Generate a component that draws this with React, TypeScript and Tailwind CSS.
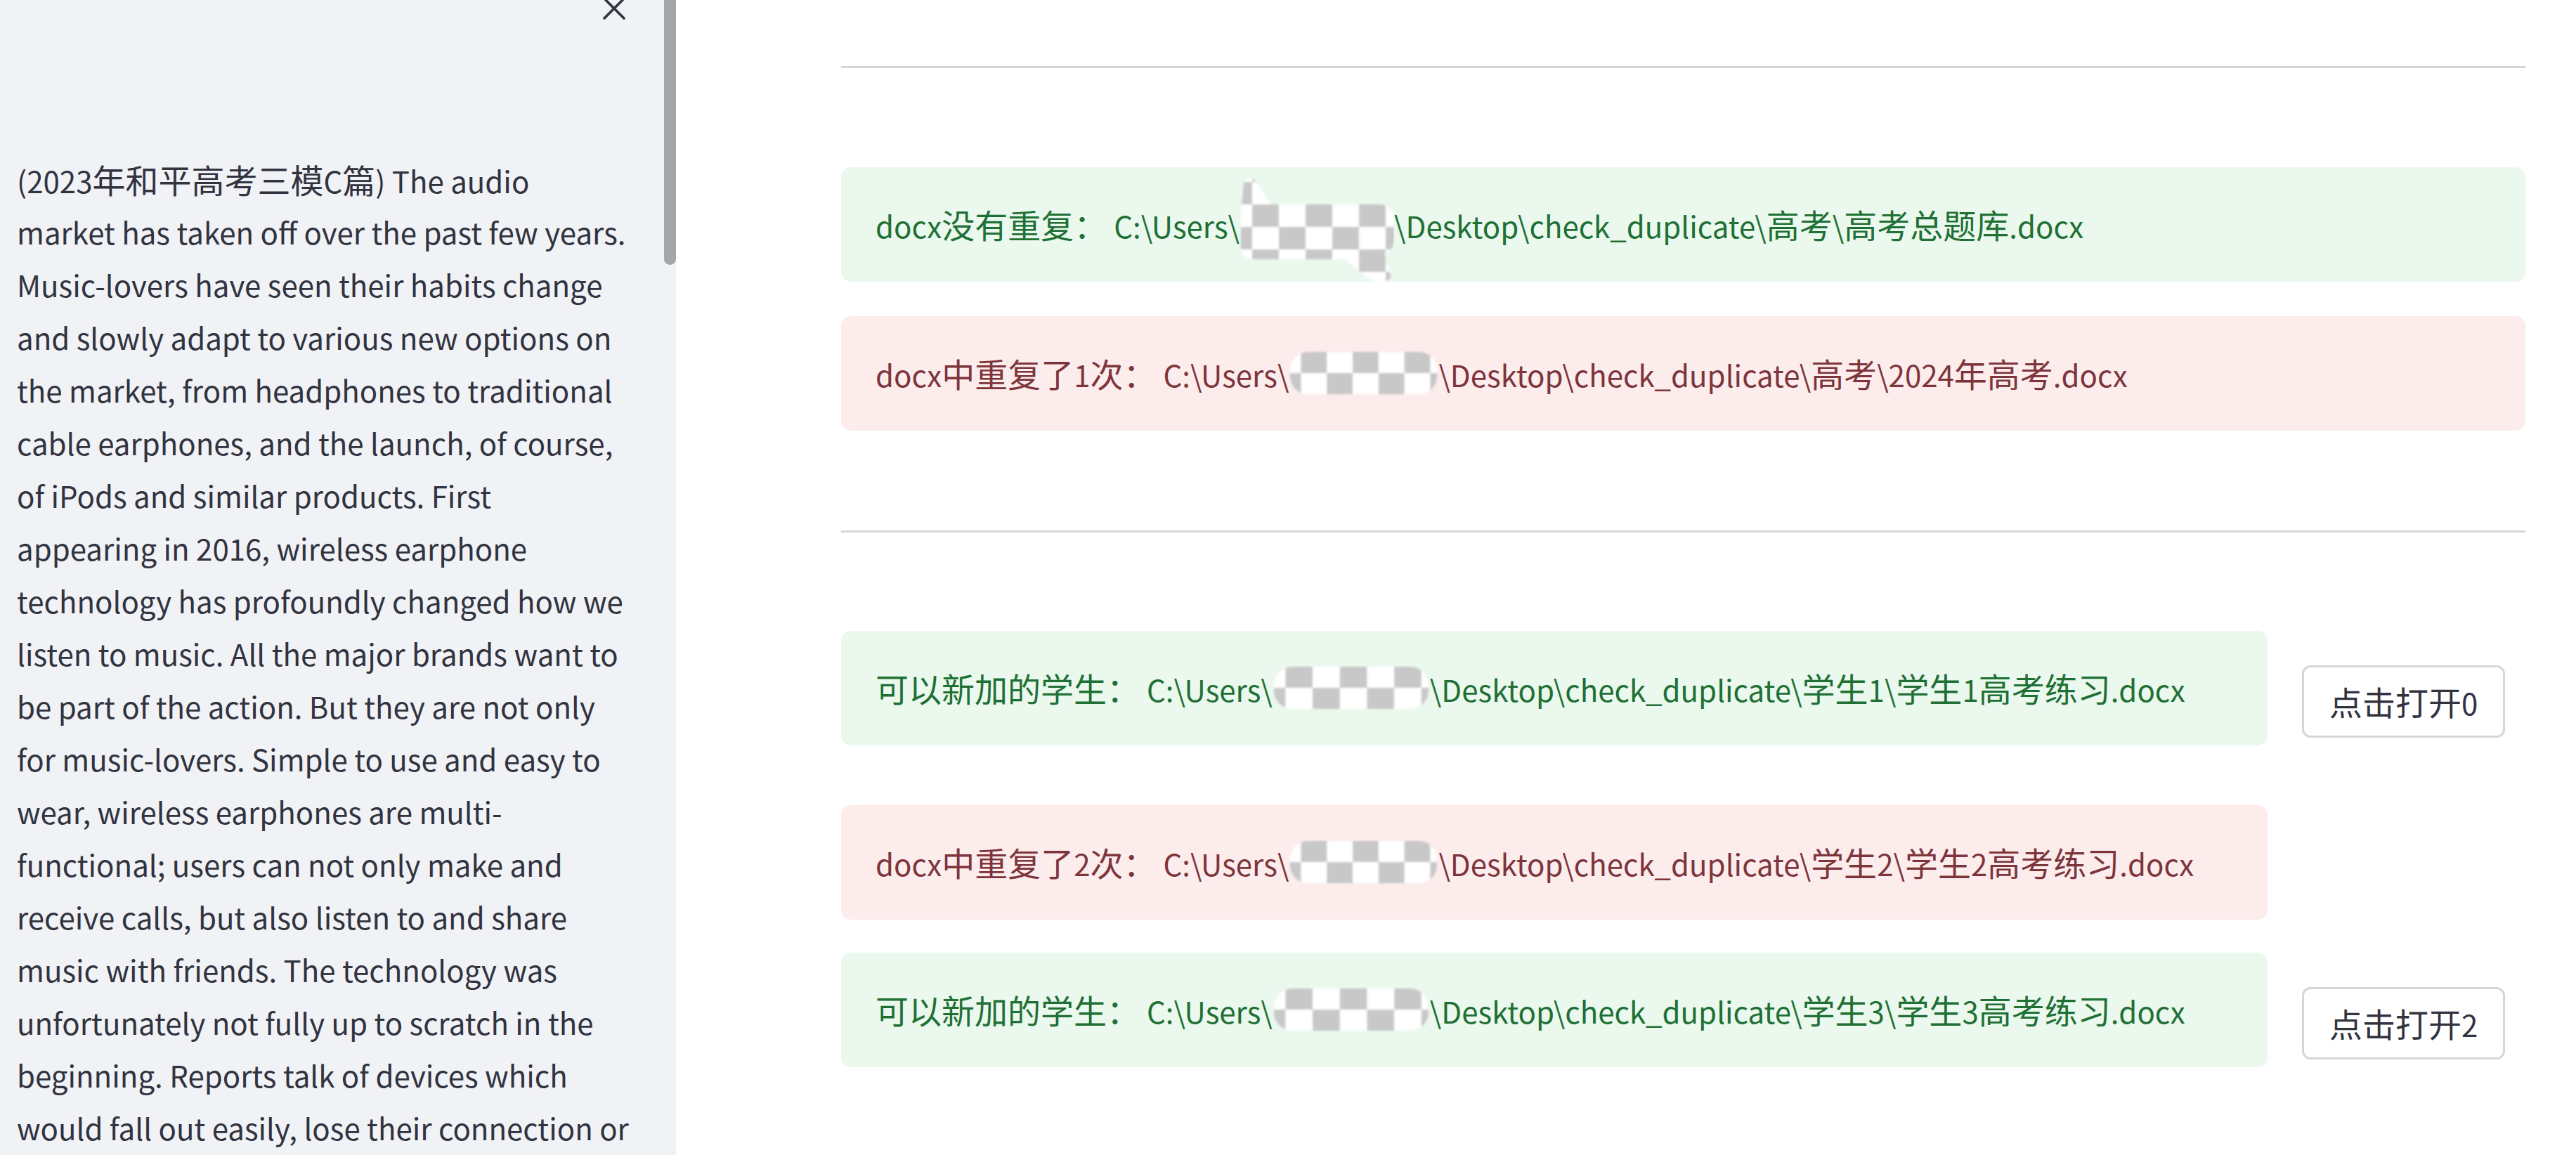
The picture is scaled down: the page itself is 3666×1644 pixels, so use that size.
import { useId } from "react";

const LINES = [
  "(2023年和平高考三模C篇) The audio",
  "market has taken off over the past few years.",
  "Music-lovers have seen their habits change",
  "and slowly adapt to various new options on",
  "the market, from headphones to traditional",
  "cable earphones, and the launch, of course,",
  "of iPods and similar products. First",
  "appearing in 2016, wireless earphone",
  "technology has profoundly changed how we",
  "listen to music. All the major brands want to",
  "be part of the action. But they are not only",
  "for music-lovers. Simple to use and easy to",
  "wear, wireless earphones are multi-",
  "functional; users can not only make and",
  "receive calls, but also listen to and share",
  "music with friends. The technology was",
  "unfortunately not fully up to scratch in the",
  "beginning. Reports talk of devices which",
  "would fall out easily, lose their connection or",
];

type Tone = "ok" | "dup";

type Row = {
  tone: Tone;
  label: string;
  tail: string;
  blob: "plane" | "pill";
  blobWidth: string;
  button?: string;
};

const TOP_ROWS: Row[] = [
  { tone: "ok", label: "docx没有重复：", tail: "\\Desktop\\check_duplicate\\高考\\高考总题库.docx", blob: "plane", blobWidth: "w-[220px]" },
  { tone: "dup", label: "docx中重复了1次：", tail: "\\Desktop\\check_duplicate\\高考\\2024年高考.docx", blob: "pill", blobWidth: "w-[213px]" },
];

const STUDENT_ROWS: Row[] = [
  { tone: "ok", label: "可以新加的学生：", tail: "\\Desktop\\check_duplicate\\学生1\\学生1高考练习.docx", blob: "pill", blobWidth: "w-[224px]", button: "点击打开0" },
  { tone: "dup", label: "docx中重复了2次：", tail: "\\Desktop\\check_duplicate\\学生2\\学生2高考练习.docx", blob: "pill", blobWidth: "w-[213px]" },
  { tone: "ok", label: "可以新加的学生：", tail: "\\Desktop\\check_duplicate\\学生3\\学生3高考练习.docx", blob: "pill", blobWidth: "w-[224px]", button: "点击打开2" },
];

// latin glyphs of the CJK face run wide, so CJK runs get their own size
function Mixed({ text }: { text: string }) {
  const parts = text.split(/([\u3000-\u9fff\uff00-\uffef]+)/);
  return (
    <>
      {parts.map((p, i) =>
        i % 2 === 1 ? (
          <span key={i} className="text-[47px]">
            {p}
          </span>
        ) : (
          p
        ),
      )}
    </>
  );
}

// pixelated username redaction
function Mosaic({ shape, widthClass }: { shape: "plane" | "pill"; widthClass: string }) {
  const id = useId().replace(/:/g, "");
  const plane = shape === "plane";
  return (
    <span className={`relative inline-block h-[75px] align-top ${widthClass}`}>
      <svg
        className={plane ? "absolute left-0 top-[-30px] h-[153px] w-full" : "absolute left-0 top-[6px] h-[64px] w-full"}
        viewBox={plane ? "0 0 220 153" : "0 0 220 64"}
        preserveAspectRatio="none"
      >
        <defs>
          <pattern id={`p${id}`} width="76" height="64" patternUnits="userSpaceOnUse" x="18" y={plane ? "40" : "0"}>
            <rect width="76" height="64" fill="#ffffff" />
            <rect width="38" height="32" fill="#c8c8c8" />
            <rect x="38" y="32" width="38" height="32" fill="#c8c8c8" />
          </pattern>
          <filter id={`f${id}`} x="-10%" y="-10%" width="120%" height="120%">
            <feGaussianBlur stdDeviation="1.8" />
          </filter>
        </defs>
        {plane ? (
          <path
            d="M6 8 Q14 -2 24 8 L44 40 L198 40 Q220 40 220 62 L220 88 Q220 106 206 110 L216 144 Q204 156 184 146 L150 118 L22 118 Q2 118 2 100 L2 54 Z"
            fill={`url(#p${id})`}
            filter={`url(#f${id})`}
          />
        ) : (
          <rect x="2" y="2" width="216" height="60" rx="26" fill={`url(#p${id})`} filter={`url(#f${id})`} />
        )}
      </svg>
    </span>
  );
}

function Alert({ row, widthClass }: { row: Row; widthClass: string }) {
  const tone =
    row.tone === "ok" ? "bg-[#eaf8ee] text-[#1f7034]" : "bg-[#fcecec] text-[#7d353b]";
  return (
    <div className={`flex h-[163px] items-center rounded-[14px] px-[49px] whitespace-nowrap ${tone} ${widthClass}`}>
      <div>
        <Mixed text={row.label} />
        <span className="ml-[10px]">C:\Users\</span>
        <Mosaic shape={row.blob} widthClass={row.blobWidth} />
        <Mixed text={row.tail} />
      </div>
    </div>
  );
}

export default function App() {
  return (
    <div className="flex h-[1644px] w-[3666px] overflow-hidden bg-white font-['Noto_Sans_CJK_SC','Noto_Sans',sans-serif] text-[42px] leading-[75px]">
      <aside className="relative w-[962px] shrink-0 bg-[#f0f2f6] text-[#31333f]">
        <button type="button" className="absolute left-[858px] top-[-4px] h-[32px] w-[32px]" aria-label="Close">
          <svg viewBox="0 0 32 32" className="h-full w-full">
            <path d="M2 2 L30 30 M30 2 L2 30" stroke="#31333f" strokeWidth="3.6" strokeLinecap="round" />
          </svg>
        </button>
        <div className="absolute right-0 top-0 h-[377px] w-[17px] rounded-b-[9px] bg-[#a3a5ab]" />
        <div className="pl-[24px] pt-[217px]">
          {LINES.map((line, i) => (
            <div key={i} className="h-[75px] whitespace-nowrap">
              <Mixed text={line} />
            </div>
          ))}
        </div>
      </aside>

      <main className="flex-1 pl-[235px] pr-[72px] pt-[94px]">
        <div className="h-[3px] bg-[#d6d6d9]" />

        <div className="mt-[141px] flex flex-col gap-[49px]">
          {TOP_ROWS.map((row, i) => (
            <Alert key={i} row={row} widthClass="w-full" />
          ))}
        </div>

        <div className="mt-[142px] h-[3px] bg-[#d6d6d9]" />

        <div className="mt-[140px] flex flex-col">
          {STUDENT_ROWS.map((row, i) => (
            <div key={i} className={`flex items-start gap-[49px] ${i === 1 ? "mt-[85px]" : i === 2 ? "mt-[47px]" : ""}`}>
              <Alert row={row} widthClass="w-[2030px]" />
              {row.button && (
                <button
                  type="button"
                  className="mt-[49px] flex h-[103px] items-center rounded-[12px] border-[3px] border-[#d6d6d9] bg-white px-[36px] text-[#31333f]"
                >
                  <span>
                    <Mixed text={row.button} />
                  </span>
                </button>
              )}
            </div>
          ))}
        </div>
      </main>
    </div>
  );
}
